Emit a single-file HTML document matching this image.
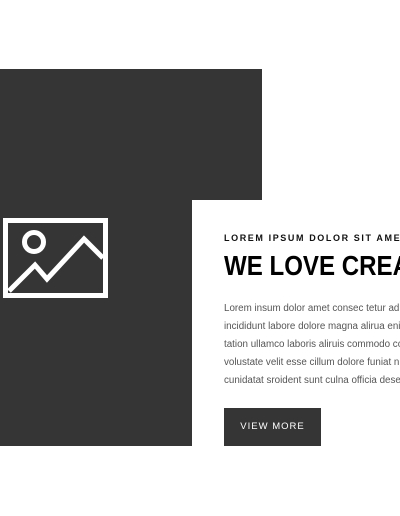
<!DOCTYPE html>
<html><head><style>
body{margin:0;width:400px;height:516px;background:#fff;position:relative;overflow:hidden;font-family:"Liberation Sans",sans-serif}
.d{position:absolute;background:#353535}
.clip{position:absolute;left:0;top:0;width:400px;height:516px;overflow:hidden}
.t{position:absolute;left:224px;white-space:nowrap}
</style></head><body>
<div class="clip">
<div class="d" style="left:0;top:69px;width:262px;height:131px"></div>
<div class="d" style="left:0;top:199px;width:192px;height:247px"></div>
<svg style="position:absolute;left:0;top:0" width="200" height="320">
<g fill="none" stroke="#fff" stroke-width="5">
<rect x="5.5" y="220.5" width="100" height="75"/>
<circle cx="34" cy="242" r="9.5"/>
<polyline points="9,291 35,265 47,279 84,239 103,258"/>
</g></svg>
<div class="t" style="top:233px;font-size:9px;font-weight:bold;letter-spacing:1.6px;color:#111">LOREM IPSUM DOLOR SIT AMET</div>
<div class="t" style="top:250px;font-size:28px;font-weight:bold;color:#000;transform:scaleX(0.86);transform-origin:0 0">WE LOVE CREATIVE</div>
<div class="t" style="top:300px;font-size:9.8px;line-height:18px;color:#555">Lorem insum dolor amet consec tetur adipiscing<br>incididunt labore dolore magna alirua enim ad<br>tation ullamco laboris aliruis commodo conse<br>volustate velit esse cillum dolore funiat nulla<br>cunidatat sroident sunt culna officia deserunt</div>
<div style="position:absolute;left:224px;top:408px;width:97px;height:38px;background:#353535;color:#fff;font-size:9.5px;letter-spacing:1px;text-align:center;line-height:38px">VIEW MORE</div>
</div>
</body></html>
